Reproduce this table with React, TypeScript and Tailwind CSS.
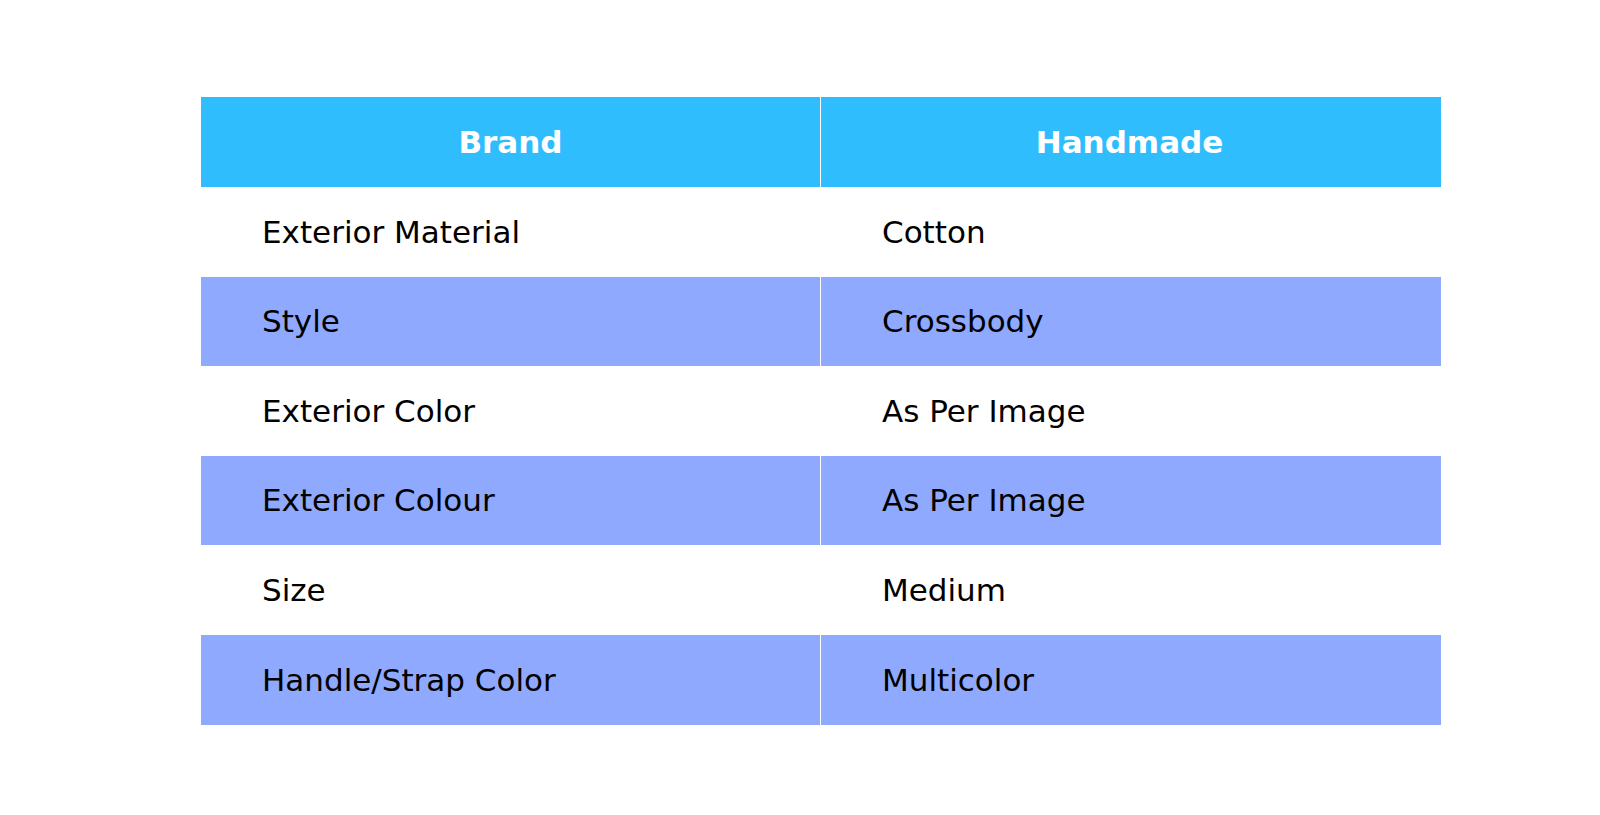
const rows = [
  ["Exterior Material", "Cotton"],
  ["Style", "Crossbody"],
  ["Exterior Color", "As Per Image"],
  ["Exterior Colour", "As Per Image"],
  ["Size", "Medium"],
  ["Handle/Strap Color", "Multicolor"],
];

export default function App() {
  return (
    <div
      className="min-h-[815px] w-full bg-white pt-[97px] pl-[201px]"
      style={{ fontFamily: '"DejaVu Sans", "Liberation Sans", sans-serif' }}
    >
      <div className="w-[1240px]">
        <div className="grid h-[90px] grid-cols-2 bg-[#30bdfe] text-[31px] font-bold text-white">
          <div className="flex items-center justify-center border-r border-white">Brand</div>
          <div className="flex items-center justify-center pr-[3px]">Handmade</div>
        </div>
        {rows.map(([label, value], i) => (
          <div
            key={i}
            className={
              "grid h-[89.6px] grid-cols-2 text-[31px] text-black " +
              (i % 2 === 1 ? "bg-[#8fa9fe]" : "bg-white")
            }
          >
            <div className="flex items-center border-r border-white pl-[61px]">{label}</div>
            <div className="flex items-center pl-[61px]">{value}</div>
          </div>
        ))}
      </div>
    </div>
  );
}
